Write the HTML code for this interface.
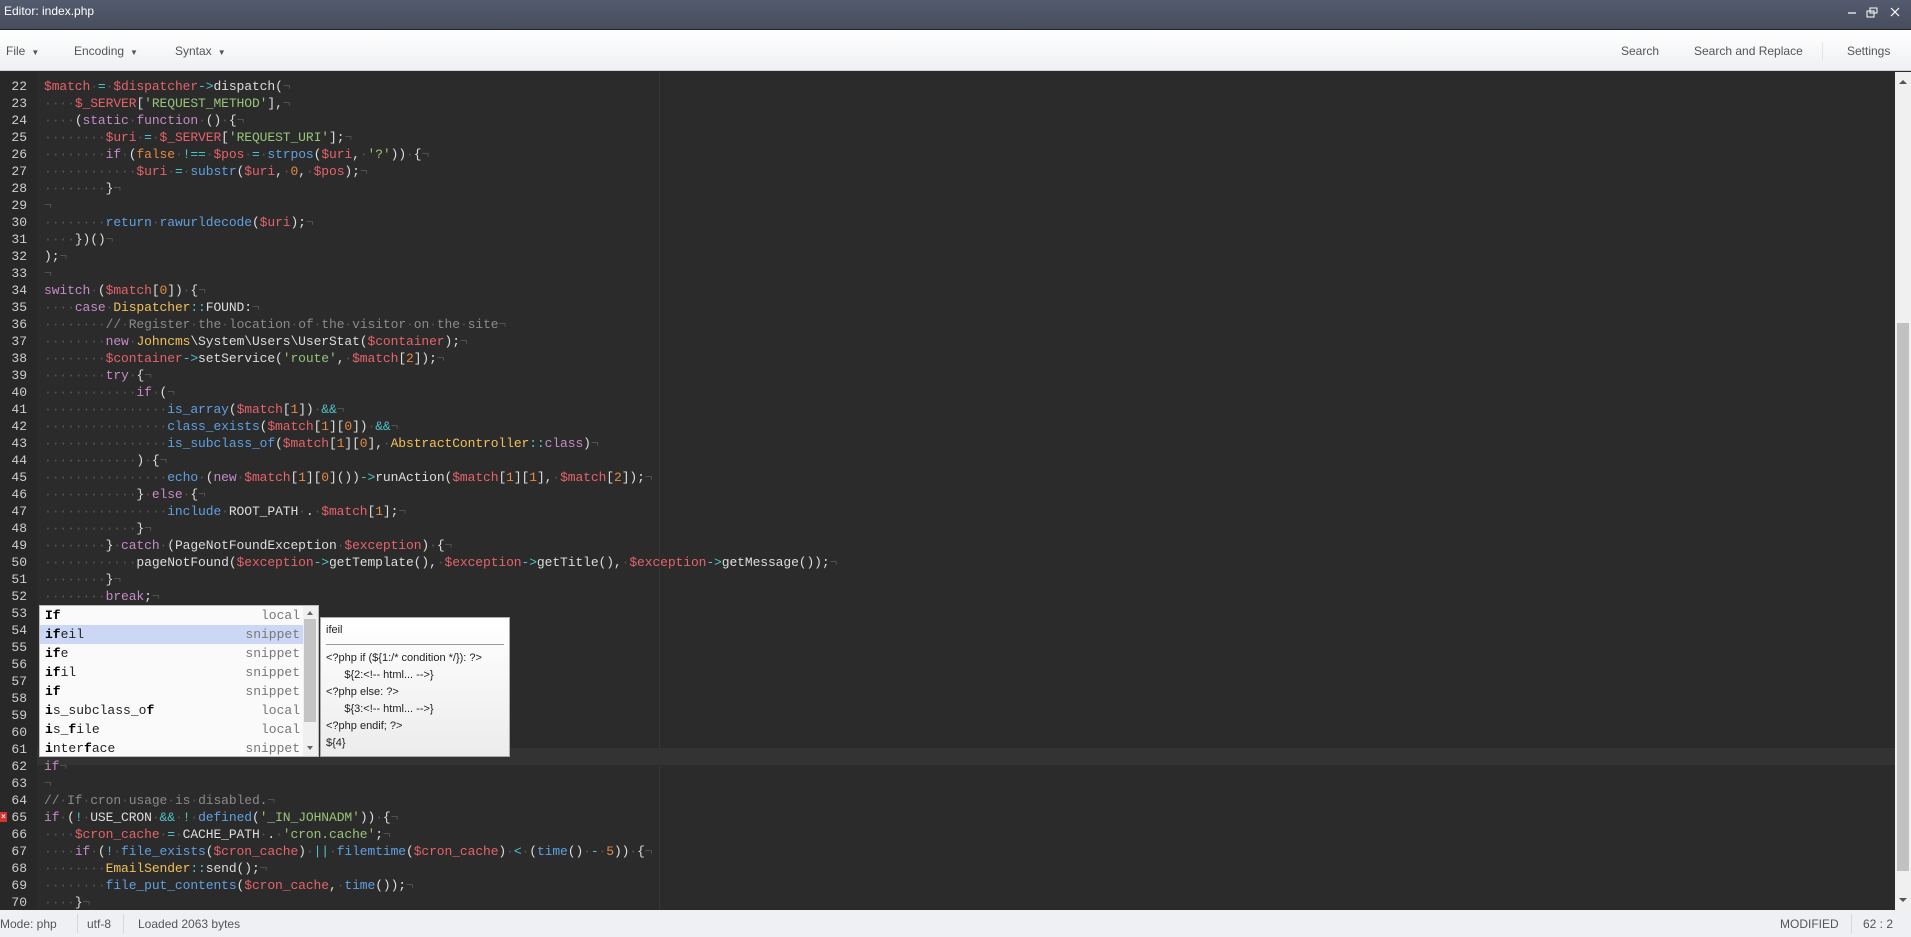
<!DOCTYPE html>
<html><head><meta charset="utf-8"><style>
*{margin:0;padding:0;box-sizing:border-box}
body{width:1911px;height:937px;overflow:hidden;background:#2b2b2b;font-family:"Liberation Sans",sans-serif;position:relative}
#title{position:absolute;left:0;top:0;width:1911px;height:30px;background:linear-gradient(#545b6e,#474d5e);border-bottom:1px solid #222;color:#fff;font-size:12px;line-height:22px;padding-left:4px}
#tb{position:absolute;left:0;top:30px;width:1911px;height:41px;background:linear-gradient(#fff,#eef0f3);border-bottom:1px solid #d0d0d0;font-size:12px;color:#555}
#tb span{position:absolute;top:14px}
.car{font-size:8px;margin-left:6px}
#ed{position:absolute;left:0;top:72px;width:1895px;height:838px;background:#2b2b2b;overflow:hidden}
#gut{position:absolute;left:0;top:0;width:37px;height:838px;background:#282828}
.ln{position:absolute;left:0;width:27px;text-align:right;color:#cfcfcf;font:13px "Liberation Mono",monospace;height:17px;line-height:17px}
#code{position:absolute;left:44px;top:0;font:13px "Liberation Mono",monospace;letter-spacing:-0.1px;color:#ddd;white-space:pre}
.l{position:absolute;left:0;height:17px;line-height:17px}
#pm{position:absolute;left:659px;top:0;width:1px;height:838px;background:#363636}
#act{position:absolute;left:37px;top:676px;width:1858px;height:17px;background:#333}
i{font-style:normal;color:#555}
.v{color:#e5636b}.s{color:#98c379}.k{color:#c58bc7}.f{color:#5fa0e0}.o{color:#4fc1c9}.n{color:#e58a42}.c{color:#f0c05a}.m{color:#8a8a8a}
#sb{position:absolute;left:1895px;top:72px;width:16px;height:838px;background:#f0f0f0}
#thumb{position:absolute;left:1897px;top:323px;width:12px;height:548px;background:#c1c1c1}
#st{position:absolute;left:0;top:910px;width:1911px;height:27px;background:#eef0f4;font-size:12px;color:#555}
#st span{position:absolute;top:7px}
.sep{position:absolute;top:4px;width:1px;height:19px;background:#d8d8d8}
#ac{position:absolute;left:39px;top:605px;width:280px;height:152px;background:#fafafa;border:1px solid #bbb;font:13px "Liberation Mono",monospace;color:#222}
.r{position:absolute;left:0;width:264px;height:19px;line-height:19px;padding-left:5px}
.r b{font-weight:bold;color:#000}
.r em{position:absolute;right:4px;font-style:normal;color:#777}
#acs{position:absolute;right:0;top:0;width:15px;height:150px;background:#f0f0f0}
#doc{position:absolute;left:320px;top:617px;width:190px;height:140px;background:linear-gradient(#fff,#ececec);border:1px solid #aaa;font-size:11px;color:#222;padding:4px 5px}
</style></head><body>
<div id="title">Editor: index.php
<svg style="position:absolute;left:1844px;top:6px" width="60" height="14"><path d="M4 7h8" stroke="#fff" stroke-width="1.2"/><rect x="23" y="5" width="7" height="6" fill="none" stroke="#fff"/><rect x="26" y="2" width="7" height="5" fill="none" stroke="#fff"/><path d="M47 2l8 8M55 2l-8 8" stroke="#fff" stroke-width="1.2"/></svg></div>
<div id="tb"><span style="left:6px">File<span class="car" style="position:static">▼</span></span><span style="left:74px">Encoding<span class="car" style="position:static">▼</span></span><span style="left:175px">Syntax<span class="car" style="position:static">▼</span></span>
<span style="left:1621px">Search</span><span style="left:1694px">Search and Replace</span><div class="sep" style="left:1822px;top:12px;background:#e4e4e4"></div><span style="left:1847px">Settings</span></div>
<div id="ed"><div id="gut"></div><div id="pm"></div><div id="act"></div>
<div id="code">
<div class="l" style="top:6px"><span class="v">$match</span><i>·</i><span class="o">=</span><i>·</i><span class="v">$dispatcher</span><span class="o">-></span>dispatch(<i>¬</i></div>
<div class="l" style="top:23px"><i>····</i><span class="v">$_SERVER</span>[<span class="s">'REQUEST_METHOD'</span>],<i>¬</i></div>
<div class="l" style="top:40px"><i>····</i>(<span class="k">static</span><i>·</i><span class="k">function</span><i>·</i>()<i>·</i>{<i>¬</i></div>
<div class="l" style="top:57px"><i>········</i><span class="v">$uri</span><i>·</i><span class="o">=</span><i>·</i><span class="v">$_SERVER</span>[<span class="s">'REQUEST_URI'</span>];<i>¬</i></div>
<div class="l" style="top:74px"><i>········</i><span class="k">if</span><i>·</i>(<span class="n">false</span><i>·</i><span class="o">!==</span><i>·</i><span class="v">$pos</span><i>·</i><span class="o">=</span><i>·</i><span class="f">strpos</span>(<span class="v">$uri</span>,<i>·</i><span class="s">'?'</span>))<i>·</i>{<i>¬</i></div>
<div class="l" style="top:91px"><i>············</i><span class="v">$uri</span><i>·</i><span class="o">=</span><i>·</i><span class="f">substr</span>(<span class="v">$uri</span>,<i>·</i><span class="n">0</span>,<i>·</i><span class="v">$pos</span>);<i>¬</i></div>
<div class="l" style="top:108px"><i>········</i>}<i>¬</i></div>
<div class="l" style="top:125px"><i>¬</i></div>
<div class="l" style="top:142px"><i>········</i><span class="f">return</span><i>·</i><span class="f">rawurldecode</span>(<span class="v">$uri</span>);<i>¬</i></div>
<div class="l" style="top:159px"><i>····</i>})()<i>¬</i></div>
<div class="l" style="top:176px">);<i>¬</i></div>
<div class="l" style="top:193px"><i>¬</i></div>
<div class="l" style="top:210px"><span class="k">switch</span><i>·</i>(<span class="v">$match</span>[<span class="n">0</span>])<i>·</i>{<i>¬</i></div>
<div class="l" style="top:227px"><i>····</i><span class="k">case</span><i>·</i><span class="c">Dispatcher</span><span class="o">::</span>FOUND:<i>¬</i></div>
<div class="l" style="top:244px"><i>········</i><span class="m">//<i>·</i>Register<i>·</i>the<i>·</i>location<i>·</i>of<i>·</i>the<i>·</i>visitor<i>·</i>on<i>·</i>the<i>·</i>site</span><i>¬</i></div>
<div class="l" style="top:261px"><i>········</i><span class="k">new</span><i>·</i><span class="c">Johncms</span>\System\Users\UserStat(<span class="v">$container</span>);<i>¬</i></div>
<div class="l" style="top:278px"><i>········</i><span class="v">$container</span><span class="o">-></span>setService(<span class="s">'route'</span>,<i>·</i><span class="v">$match</span>[<span class="n">2</span>]);<i>¬</i></div>
<div class="l" style="top:295px"><i>········</i><span class="k">try</span><i>·</i>{<i>¬</i></div>
<div class="l" style="top:312px"><i>············</i><span class="k">if</span><i>·</i>(<i>¬</i></div>
<div class="l" style="top:329px"><i>················</i><span class="f">is_array</span>(<span class="v">$match</span>[<span class="n">1</span>])<i>·</i><span class="o">&amp;&amp;</span><i>¬</i></div>
<div class="l" style="top:346px"><i>················</i><span class="f">class_exists</span>(<span class="v">$match</span>[<span class="n">1</span>][<span class="n">0</span>])<i>·</i><span class="o">&amp;&amp;</span><i>¬</i></div>
<div class="l" style="top:363px"><i>················</i><span class="f">is_subclass_of</span>(<span class="v">$match</span>[<span class="n">1</span>][<span class="n">0</span>],<i>·</i><span class="c">AbstractController</span><span class="o">::</span><span class="k">class</span>)<i>¬</i></div>
<div class="l" style="top:380px"><i>············</i>)<i>·</i>{<i>¬</i></div>
<div class="l" style="top:397px"><i>················</i><span class="f">echo</span><i>·</i>(<span class="k">new</span><i>·</i><span class="v">$match</span>[<span class="n">1</span>][<span class="n">0</span>]())<span class="o">-></span>runAction(<span class="v">$match</span>[<span class="n">1</span>][<span class="n">1</span>],<i>·</i><span class="v">$match</span>[<span class="n">2</span>]);<i>¬</i></div>
<div class="l" style="top:414px"><i>············</i>}<i>·</i><span class="k">else</span><i>·</i>{<i>¬</i></div>
<div class="l" style="top:431px"><i>················</i><span class="f">include</span><i>·</i>ROOT_PATH<i>·</i>.<i>·</i><span class="v">$match</span>[<span class="n">1</span>];<i>¬</i></div>
<div class="l" style="top:448px"><i>············</i>}<i>¬</i></div>
<div class="l" style="top:465px"><i>········</i>}<i>·</i><span class="k">catch</span><i>·</i>(PageNotFoundException<i>·</i><span class="v">$exception</span>)<i>·</i>{<i>¬</i></div>
<div class="l" style="top:482px"><i>············</i>pageNotFound(<span class="v">$exception</span><span class="o">-></span>getTemplate(),<i>·</i><span class="v">$exception</span><span class="o">-></span>getTitle(),<i>·</i><span class="v">$exception</span><span class="o">-></span>getMessage());<i>¬</i></div>
<div class="l" style="top:499px"><i>········</i>}<i>¬</i></div>
<div class="l" style="top:516px"><i>········</i><span class="k">break</span>;<i>¬</i></div>
<div class="l" style="top:686px"><span class="k">if</span><i>¬</i></div>
<div class="l" style="top:703px"><i>¬</i></div>
<div class="l" style="top:720px"><span class="m">//<i>·</i>If<i>·</i>cron<i>·</i>usage<i>·</i>is<i>·</i>disabled.</span><i>¬</i></div>
<div class="l" style="top:737px"><span class="k">if</span><i>·</i>(<span class="o">!</span><i>·</i>USE_CRON<i>·</i><span class="o">&amp;&amp;</span><i>·</i><span class="o">!</span><i>·</i><span class="f">defined</span>(<span class="s">'_IN_JOHNADM'</span>))<i>·</i>{<i>¬</i></div>
<div class="l" style="top:754px"><i>····</i><span class="v">$cron_cache</span><i>·</i><span class="o">=</span><i>·</i>CACHE_PATH<i>·</i>.<i>·</i><span class="s">'cron.cache'</span>;<i>¬</i></div>
<div class="l" style="top:771px"><i>····</i><span class="k">if</span><i>·</i>(<span class="o">!</span><i>·</i><span class="f">file_exists</span>(<span class="v">$cron_cache</span>)<i>·</i><span class="o">||</span><i>·</i><span class="f">filemtime</span>(<span class="v">$cron_cache</span>)<i>·</i><span class="o">&lt;</span><i>·</i>(<span class="f">time</span>()<i>·</i><span class="o">-</span><i>·</i><span class="n">5</span>))<i>·</i>{<i>¬</i></div>
<div class="l" style="top:788px"><i>········</i><span class="c">EmailSender</span><span class="o">::</span>send();<i>¬</i></div>
<div class="l" style="top:805px"><i>········</i><span class="f">file_put_contents</span>(<span class="v">$cron_cache</span>,<i>·</i><span class="f">time</span>());<i>¬</i></div>
<div class="l" style="top:822px"><i>····</i>}<i>¬</i></div>
</div>
<div class="ln" style="top:6px">22</div><div class="ln" style="top:23px">23</div><div class="ln" style="top:40px">24</div><div class="ln" style="top:57px">25</div><div class="ln" style="top:74px">26</div><div class="ln" style="top:91px">27</div><div class="ln" style="top:108px">28</div><div class="ln" style="top:125px">29</div><div class="ln" style="top:142px">30</div><div class="ln" style="top:159px">31</div><div class="ln" style="top:176px">32</div><div class="ln" style="top:193px">33</div><div class="ln" style="top:210px">34</div><div class="ln" style="top:227px">35</div><div class="ln" style="top:244px">36</div><div class="ln" style="top:261px">37</div><div class="ln" style="top:278px">38</div><div class="ln" style="top:295px">39</div><div class="ln" style="top:312px">40</div><div class="ln" style="top:329px">41</div><div class="ln" style="top:346px">42</div><div class="ln" style="top:363px">43</div><div class="ln" style="top:380px">44</div><div class="ln" style="top:397px">45</div><div class="ln" style="top:414px">46</div><div class="ln" style="top:431px">47</div><div class="ln" style="top:448px">48</div><div class="ln" style="top:465px">49</div><div class="ln" style="top:482px">50</div><div class="ln" style="top:499px">51</div><div class="ln" style="top:516px">52</div><div class="ln" style="top:533px">53</div><div class="ln" style="top:550px">54</div><div class="ln" style="top:567px">55</div><div class="ln" style="top:584px">56</div><div class="ln" style="top:601px">57</div><div class="ln" style="top:618px">58</div><div class="ln" style="top:635px">59</div><div class="ln" style="top:652px">60</div><div class="ln" style="top:669px">61</div><div class="ln" style="top:686px">62</div><div class="ln" style="top:703px">63</div><div class="ln" style="top:720px">64</div><div class="ln" style="top:737px">65</div><div class="ln" style="top:754px">66</div><div class="ln" style="top:771px">67</div><div class="ln" style="top:788px">68</div><div class="ln" style="top:805px">69</div><div class="ln" style="top:822px">70</div>
<div style="position:absolute;left:0;top:740px;width:7px;height:10px;background:#d93030;color:#fff;font-size:8px;line-height:10px;text-align:center;font-weight:bold">×</div>
</div>
<div id="sb"><div style="position:absolute;left:4px;top:8px;border:4px solid transparent;border-bottom:4px solid #555;border-top:0"></div><div style="position:absolute;left:4px;top:826px;border:4px solid transparent;border-top:4px solid #555;border-bottom:0"></div></div>
<div id="thumb"></div>
<div id="ac">
<div class="r" style="top:0"><b>If</b><em>local</em></div>
<div class="r" style="top:19px;background:#cbd7f5"><b>if</b>eil<em>snippet</em></div>
<div class="r" style="top:38px"><b>if</b>e<em>snippet</em></div>
<div class="r" style="top:57px"><b>if</b>il<em>snippet</em></div>
<div class="r" style="top:76px"><b>if</b><em>snippet</em></div>
<div class="r" style="top:95px"><b>i</b>s_subclass_o<b>f</b><em>local</em></div>
<div class="r" style="top:114px"><b>i</b>s_<b>f</b>ile<em>local</em></div>
<div class="r" style="top:133px"><b>i</b>nter<b>f</b>ace<em>snippet</em></div>
<div id="acs"><div style="position:absolute;left:1px;top:13px;width:12px;height:103px;background:#c4c4c4"></div><div style="position:absolute;left:4px;top:5px;border:3px solid transparent;border-bottom:4px solid #666;border-top:0"></div><div style="position:absolute;left:4px;top:140px;border:3px solid transparent;border-top:4px solid #666;border-bottom:0"></div></div>
</div>
<div id="doc"><div style="line-height:16px">ifeil</div><div style="border-top:1px solid #999;margin:6px 0 5px"></div>
<div style="line-height:17px">&lt;?php if (${1:/* condition */}): ?&gt;<br>&nbsp;&nbsp;&nbsp;&nbsp;&nbsp;&nbsp;${2:&lt;!-- html... --&gt;}<br>&lt;?php else: ?&gt;<br>&nbsp;&nbsp;&nbsp;&nbsp;&nbsp;&nbsp;${3:&lt;!-- html... --&gt;}<br>&lt;?php endif; ?&gt;<br>${4}</div></div>
<div id="st"><span style="left:0">Mode: php</span><div class="sep" style="left:77px"></div><span style="left:87px">utf-8</span><div class="sep" style="left:123px"></div><span style="left:138px">Loaded 2063 bytes</span><span style="left:1780px">MODIFIED</span><div class="sep" style="left:1851px"></div><span style="left:1863px">62 : 2</span></div>
</body></html>
